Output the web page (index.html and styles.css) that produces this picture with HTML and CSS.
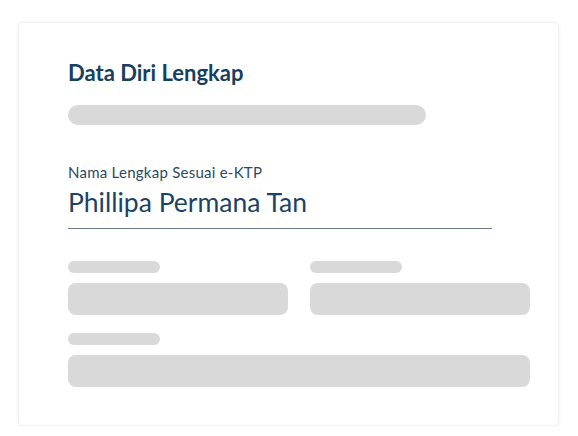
FILE: index.html
```html
<!DOCTYPE html>
<html lang="id">
<head>
<meta charset="utf-8">
<title>Data Diri Lengkap</title>
<link rel="stylesheet" href="styles.css">
</head>
<body>
<div class="card">
  <h1 class="title">Data Diri Lengkap</h1>
  <div class="skel skel-sub"></div>
  <div class="field-main">
    <div class="label">Nama Lengkap Sesuai e-KTP</div>
    <div class="value">Phillipa Permana Tan</div>
  </div>
  <div class="fields">
    <div class="field">
      <div class="skel skel-label"></div>
      <div class="skel skel-input"></div>
    </div>
    <div class="field">
      <div class="skel skel-label"></div>
      <div class="skel skel-input"></div>
    </div>
    <div class="field field-wide">
      <div class="skel skel-label"></div>
      <div class="skel skel-input"></div>
    </div>
  </div>
</div>
</body>
</html>
```
FILE: styles.css
```css
html, body {
  margin: 0;
  padding: 0;
  background: #ffffff;
}
body {
  font-family: Lato, "Open Sans", "Liberation Sans", sans-serif;
}
.card {
  box-sizing: border-box;
  width: 541px;
  height: 404px;
  margin: 22px 0 0 18px;
  padding: 37px 29px 0 49px;
  background: #ffffff;
  border: 1px solid #f1f1f1;
  border-radius: 4px;
  box-shadow: 0 1px 4px rgba(0, 0, 0, 0.06);
}
.title {
  margin: 0;
  font-size: 22px;
  line-height: 26px;
  font-weight: 700;
  color: #173f60;
}
.skel {
  background: #d9d9d9;
}
.skel-sub {
  width: 358px;
  height: 20px;
  border-radius: 10px;
  margin-top: 19px;
}
.field-main {
  margin-top: 38px;
  width: 424px;
  border-bottom: 1px solid #6d7c8b;
  padding-bottom: 10px;
}
.label {
  font-size: 15px;
  line-height: 18px;
  letter-spacing: 0.25px;
  color: #2d4a64;
}
.value {
  margin-top: 5px;
  font-size: 26.5px;
  line-height: 32px;
  color: #1c4366;
}
.fields {
  margin-top: 32px;
  display: grid;
  grid-template-columns: 220px 220px;
  column-gap: 22px;
  row-gap: 18px;
}
.field {
  display: flex;
  flex-direction: column;
  gap: 10px;
}
.field-wide {
  grid-column: 1 / span 2;
}
.skel-label {
  width: 92px;
  height: 12px;
  border-radius: 6px;
}
.skel-input {
  height: 32px;
  border-radius: 8px;
}
```
